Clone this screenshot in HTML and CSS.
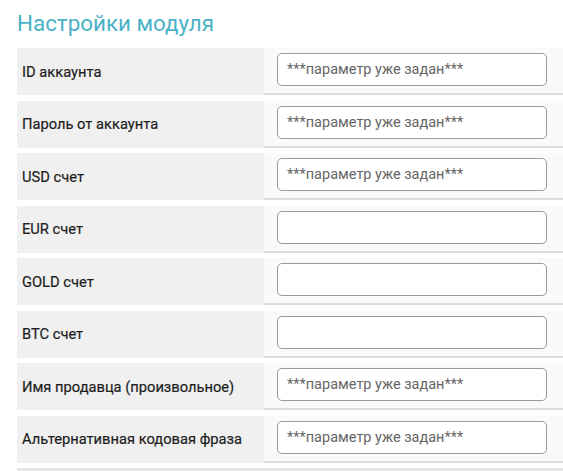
FILE: index.html
```html
<!DOCTYPE html>
<html lang="ru">
<head>
<meta charset="utf-8">
<link rel="stylesheet" href="styles.css">
</head>
<body>
<div class="page">
  <h1 class="title">Настройки модуля</h1>
  <div class="table">
    <div class="row"><div class="label">ID аккаунта</div><div class="field"><input class="input" type="text" placeholder="***параметр уже задан***"></div></div>
    <div class="row"><div class="label">Пароль от аккаунта</div><div class="field"><input class="input" type="text" placeholder="***параметр уже задан***"></div></div>
    <div class="row"><div class="label">USD счет</div><div class="field"><input class="input" type="text" placeholder="***параметр уже задан***"></div></div>
    <div class="row"><div class="label">EUR счет</div><div class="field"><input class="input" type="text"></div></div>
    <div class="row"><div class="label">GOLD счет</div><div class="field"><input class="input" type="text"></div></div>
    <div class="row"><div class="label">BTC счет</div><div class="field"><input class="input" type="text"></div></div>
    <div class="row"><div class="label">Имя продавца (произвольное)</div><div class="field"><input class="input" type="text" placeholder="***параметр уже задан***"></div></div>
    <div class="row"><div class="label">Альтернативная кодовая фраза</div><div class="field"><input class="input" type="text" placeholder="***параметр уже задан***"></div></div>
    <div class="row row-next"></div>
  </div>
</div>
</body>
</html>
```

FILE: styles.css
```css
html, body {
  margin: 0;
  padding: 0;
  background: #ffffff;
  overflow: hidden;
}
.page {
  padding: 0 0 0 17px;
  font-family: Roboto, "Liberation Sans", sans-serif;
}
.title {
  margin: 0;
  padding-top: 10px;
  height: 48px;
  box-sizing: border-box;
  font-size: 22.4px;
  font-weight: 400;
  line-height: 26px;
  color: #4ab2c6;
}
.table {
  display: flex;
  flex-direction: column;
  gap: 5.5px;
}
.row {
  display: flex;
  height: 47px;
  flex: none;
}
.label {
  width: 247px;
  flex: none;
  background: #f0f0f0;
  display: flex;
  align-items: center;
  padding-left: 5px;
  box-sizing: border-box;
  font-size: 14.7px;
  font-weight: 400;
  color: #1e1e1e;
  -webkit-text-stroke: 0.2px #1e1e1e;
}
.field {
  flex: 1;
  background: #f9f9f9;
  border-bottom: 2px solid #dddddd;
  display: flex;
  align-items: center;
  padding-left: 13px;
  padding-bottom: 2px;
  box-sizing: border-box;
}
.input {
  width: 270px;
  height: 33px;
  box-sizing: border-box;
  border: 1px solid #999999;
  border-radius: 5px;
  background: #ffffff;
  padding: 0 9px;
  font-family: Roboto, "Liberation Sans", sans-serif;
  font-size: 14.5px;
  color: #555555;
  outline: none;
}
.input::placeholder {
  color: #666666;
  opacity: 1;
}
.row-next {
  background: #e6e6e6;
}
```
